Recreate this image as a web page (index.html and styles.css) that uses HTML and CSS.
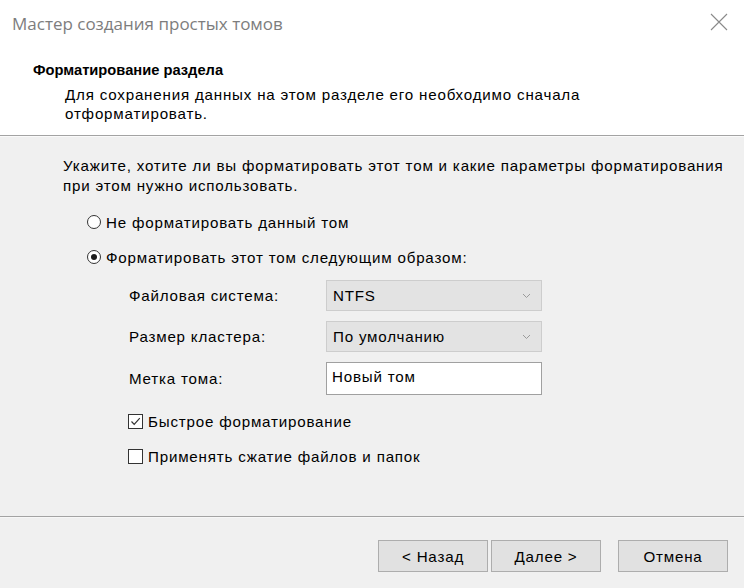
FILE: index.html
```html
<!DOCTYPE html>
<html lang="ru">
<head>
<meta charset="utf-8">
<title>Мастер создания простых томов</title>
<link rel="stylesheet" href="styles.css">
</head>
<body>
<div class="wizard">
  <header class="head">
    <div class="titlebar">
      <span class="title">Мастер создания простых томов</span>
      <svg class="close" width="18" height="18" viewBox="0 0 18 18"><path d="M1 1 L17 17 M17 1 L1 17" stroke="#8a8a8a" stroke-width="1.1" fill="none"/></svg>
    </div>
    <h1 class="heading">Форматирование раздела</h1>
    <p class="sub">Для сохранения данных на этом разделе его необходимо сначала<br>отформатировать.</p>
  </header>
  <main class="content">
    <p class="intro">Укажите, хотите ли вы форматировать этот том и какие параметры форматирования<br>при этом нужно использовать.</p>
    <div class="option first"><span class="radio"></span><span>Не форматировать данный том</span></div>
    <div class="option"><span class="radio checked"></span><span>Форматировать этот том следующим образом:</span></div>
    <div class="form">
      <span class="label">Файловая система:</span>
      <div class="select"><span>NTFS</span><svg width="9" height="6" viewBox="0 0 9 6"><path d="M1 1 L4.5 4.5 L8 1" stroke="#9a9a9a" fill="none" stroke-width="1"/></svg></div>
      <span class="label">Размер кластера:</span>
      <div class="select"><span>По умолчанию</span><svg width="9" height="6" viewBox="0 0 9 6"><path d="M1 1 L4.5 4.5 L8 1" stroke="#9a9a9a" fill="none" stroke-width="1"/></svg></div>
      <span class="label">Метка тома:</span>
      <div class="textbox">Новый том</div>
    </div>
    <div class="check first"><span class="box"><svg width="13" height="13" viewBox="0 0 13 13"><path d="M2.5 6.5 L5.2 9.3 L10.8 3.2" stroke="#333" fill="none" stroke-width="1.2"/></svg></span><span>Быстрое форматирование</span></div>
    <div class="check"><span class="box"></span><span>Применять сжатие файлов и папок</span></div>
  </main>
  <footer class="foot">
    <button class="btn">&lt; Назад</button>
    <button class="btn next">Далее &gt;</button>
    <button class="btn cancel">Отмена</button>
  </footer>
</div>
</body>
</html>
```

FILE: styles.css
```css
* { box-sizing: border-box; }
html, body { margin: 0; padding: 0; }
body {
  width: 744px;
  height: 588px;
  background: #f0f0f0;
  font-family: "Liberation Sans", Arial, sans-serif;
  font-size: 15.15px;
  letter-spacing: 0.8px;
  color: #000;
  overflow: hidden;
}
.wizard { display: flex; flex-direction: column; height: 588px; }

.head {
  background: #fff;
  height: 136px;
  border-bottom: 1px solid #a3a3a3;
  box-shadow: 0 1px 0 #fafafa;
  padding: 0;
}
.titlebar {
  display: flex;
  justify-content: space-between;
  align-items: center;
  height: 46px;
  padding: 0 16px 0 12px;
}
.title {
  font-family: "Open Sans", "Noto Sans", sans-serif;
  font-size: 17px;
  color: #7d7d7d;
  letter-spacing: 0;
}
.close { margin-top: -2px; }
.heading {
  margin: 15px 0 0 33px;
  font-size: 14.7px;
  font-weight: bold;
  line-height: 19px;
  letter-spacing: 0;
}
.sub {
  margin: 5px 0 0 65px;
  line-height: 19px;
}

.content {
  height: 381px;
  padding: 20px 0 0 63px;
  border-bottom: 1px solid #a3a3a3;
  box-shadow: 0 1px 0 #f7f7f7;
}
.intro { margin: 0; line-height: 20px; }

.option {
  display: flex;
  align-items: center;
  height: 20px;
  margin: 15px 0 0 24px;
  gap: 5px;
}
.option.first { margin-top: 16px; }
.radio {
  width: 14px; height: 14px;
  border: 1px solid #333;
  border-radius: 50%;
  background: #fff;
  position: relative;
}
.radio.checked::after {
  content: "";
  position: absolute;
  left: 3px; top: 3px;
  width: 6px; height: 6px;
  border-radius: 50%;
  background: #1a1a1a;
}

.form {
  display: grid;
  grid-template-columns: 197px 216px;
  grid-template-rows: 31px 31px 33px;
  row-gap: 10px;
  align-items: center;
  margin: 13px 0 0 66px;
}
.select {
  height: 100%;
  background: #e3e3e3;
  border: 1px solid #cdcdcd;
  display: flex;
  align-items: center;
  justify-content: space-between;
  padding: 0 10px 0 6px;
}
.textbox {
  height: 100%;
  background: #fff;
  border: 1px solid #a0a0a0;
  padding: 4px 0 0 5px;
  line-height: 20px;
}

.check {
  display: flex;
  align-items: center;
  height: 20px;
  margin: 16px 0 0 65px;
  gap: 5px;
}
.check + .check { margin-top: 15px; }
.box {
  width: 15px; height: 15px;
  border: 1px solid #333;
  background: #fff;
  display: flex;
  align-items: center;
  justify-content: center;
}

.foot {
  display: flex;
  padding: 23px 0 0 378px;
}
.btn {
  width: 110px;
  height: 32px;
  background: #e1e1e1;
  border: 1px solid #adadad;
  font-family: "Liberation Sans", Arial, sans-serif;
  font-size: 15.15px;
  letter-spacing: 0.8px;
  color: #000;
  padding: 0;
}
.btn.next { margin-left: 3px; }
.btn.cancel { margin-left: 17px; }
```
